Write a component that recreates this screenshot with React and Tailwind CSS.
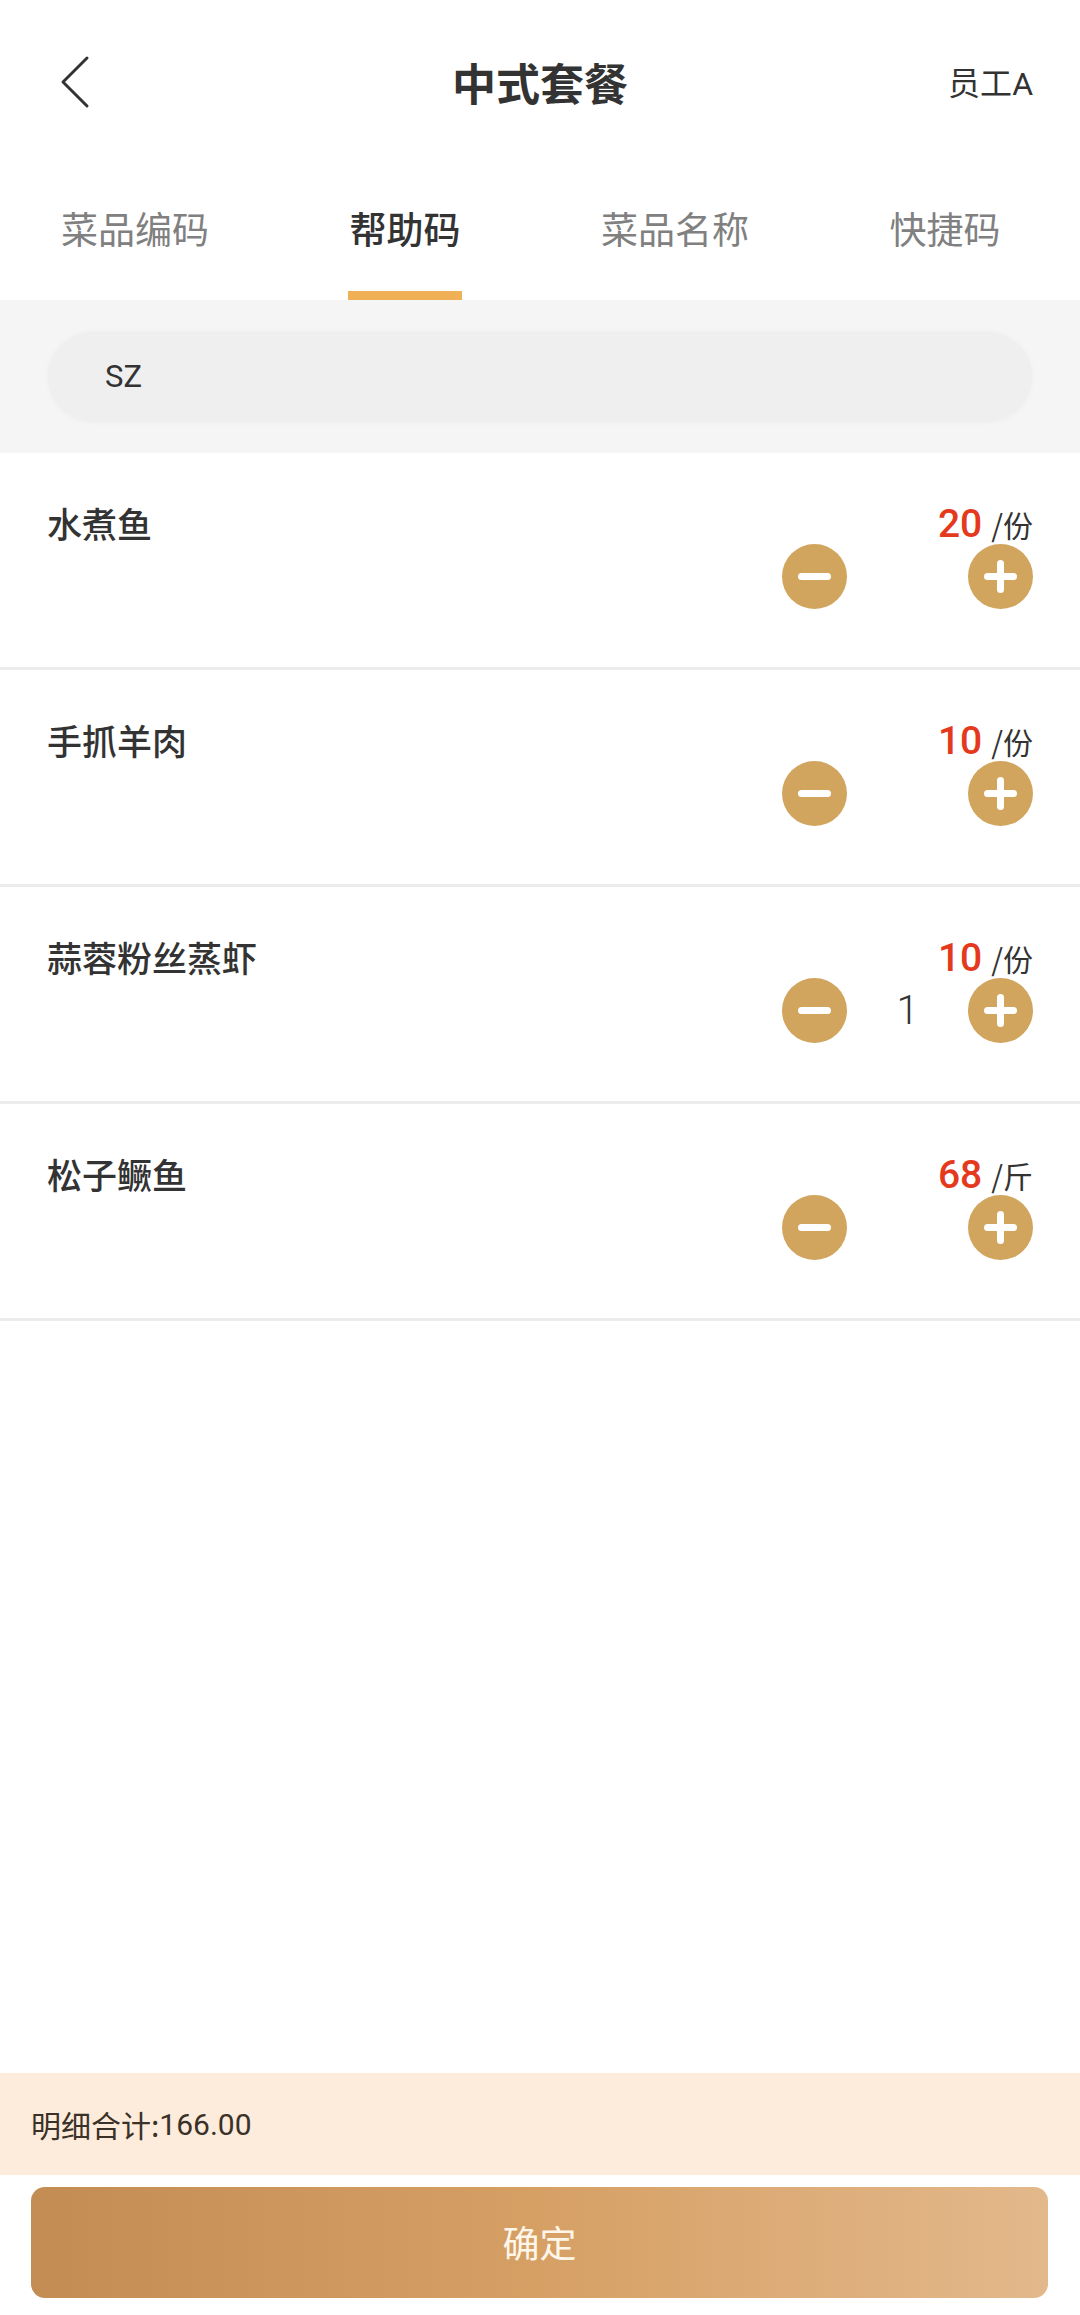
import React from 'react'

const dishes = [
  { name: '水煮鱼', price: 20, unit: '份', count: 0 },
  { name: '手抓羊肉', price: 10, unit: '份', count: 0 },
  { name: '蒜蓉粉丝蒸虾', price: 10, unit: '份', count: 1 },
  { name: '松子鳜鱼', price: 68, unit: '斤', count: 0 },
]

const tabs = ['菜品编码', '帮助码', '菜品名称', '快捷码']

function RoundButton({ plus }) {
  return (
    <button className="flex h-[65px] w-[65px] items-center justify-center rounded-full bg-[#d1a55e]">
      <svg width="33" height="33" viewBox="0 0 33 33">
        <rect x="0" y="13" width="33" height="7" rx="3.5" fill="#fff" />
        {plus && <rect x="13" y="0" width="7" height="33" rx="3.5" fill="#fff" />}
      </svg>
    </button>
  )
}

function DishRow({ dish }) {
  return (
    <div className="flex h-[217px] justify-between border-b-[3px] border-[#ececec] px-[47px] pt-[48px]">
      <div className="text-[35px] font-medium leading-[43px] text-[#333]">{dish.name}</div>
      <div className="flex flex-col items-end">
        <div className="flex h-[43px] items-baseline pt-[3px] leading-[40px]">
          <span className="font-['Roboto',sans-serif] text-[39px] font-medium text-[#e5391d]">{dish.price}</span>
          <span className="ml-[9px] text-[30px] text-[#333]">/{dish.unit}</span>
        </div>
        <div className="flex items-center">
          <RoundButton />
          <div className="w-[121px] text-center font-['Roboto',sans-serif] text-[40px] font-light text-[#333]">
            {dish.count > 0 ? dish.count : ''}
          </div>
          <RoundButton plus />
        </div>
      </div>
    </div>
  )
}

export default function App() {
  const active = 1

  return (
    <div className="flex min-h-[2315px] w-[1080px] flex-col bg-white font-['Noto_Sans_CJK_SC','Noto_Sans',sans-serif] text-[#333]">
      {/* header */}
      <div className="flex h-[164px] items-center">
        <div className="w-[220px] pl-[58px]">
          <svg width="32" height="54" viewBox="0 0 32 54">
            <polyline points="29,3 5,27 29,51" fill="none" stroke="#333" strokeWidth="3" strokeLinecap="round" strokeLinejoin="round" />
          </svg>
        </div>
        <div className="flex-1 text-center text-[44px] font-bold">中式套餐</div>
        <div className="w-[220px] pr-[47px] text-right text-[32px]">
          员工<span className="font-['Roboto',sans-serif]">A</span>
        </div>
      </div>

      {/* tabs */}
      <div className="grid h-[136px] grid-cols-4">
        {tabs.map((t, i) => (
          <div key={t} className="flex flex-col items-center pt-[46px]">
            <span className={i === active ? 'text-[37px] font-medium leading-none text-[#333]' : 'text-[37px] leading-none text-[#808080]'}>
              {t}
            </span>
            {i === active && <div className="mt-auto h-[9px] w-[114px] bg-[#f0b156]" />}
          </div>
        ))}
      </div>

      {/* search */}
      <div className="flex h-[153px] items-center bg-[#f5f5f5] px-[48px]">
        <input
          defaultValue="SZ"
          className="h-[90px] w-full rounded-full bg-[#efefef] pl-[57px] font-['Roboto',sans-serif] text-[31px] text-[#333] shadow-[0_0_6px_rgba(0,0,0,0.03)] outline-none"
        />
      </div>

      {/* list */}
      <div>
        {dishes.map(d => (
          <DishRow key={d.name} dish={d} />
        ))}
      </div>

      <div className="flex-1" />

      {/* footer */}
      <div className="flex h-[102px] items-center bg-[#fdebdb] px-[31px] text-[30px] text-[#3a3128]">
        明细合计:<span className="font-['Roboto',sans-serif]">166.00</span>
      </div>
      <div className="px-[31px] pb-[17px] pt-[12px]">
        <button className="flex h-[111px] w-[1017px] items-center justify-center rounded-[14px] bg-gradient-to-r from-[#c28c53] via-[#d6a065] to-[#e3b88b] text-[37px] text-[#fff6ea]">
          确定
        </button>
      </div>
    </div>
  )
}
